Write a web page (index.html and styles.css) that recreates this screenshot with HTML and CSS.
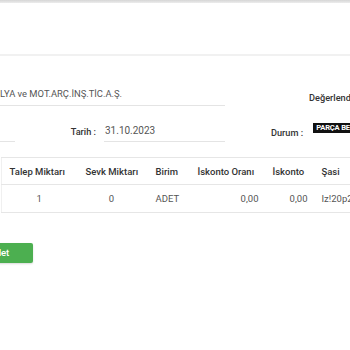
FILE: index.html
```html
<!DOCTYPE html>
<html lang="tr">
<head>
    <meta charset="UTF-8">
    <meta name="viewport" content="width=device-width, initial-scale=1.0">
    <title>Talep Detay</title>
    <link rel="stylesheet" href="styles.css">
</head>
<body>

<div class="topbar"></div>
<div class="page-header"></div>

<div class="form-section">
    <div class="form-row row-firma">
        <div class="field field-firma">LYA ve MOT.ARÇ.İNŞ.TİC.A.Ş.</div>
        <div class="label label-deger">Değerlendirme :</div>
    </div>
    <div class="form-row row-tarih">
        <div class="field field-stub"></div>
        <div class="label label-tarih">Tarih :</div>
        <div class="field field-tarih">31.10.2023</div>
        <div class="label label-durum">Durum :</div>
        <span class="badge">PARÇA BEKLENİYOR</span>
    </div>
</div>

<table class="items">
    <colgroup>
        <col class="c-talep">
        <col class="c-sevk">
        <col class="c-birim">
        <col class="c-oran">
        <col class="c-iskonto">
        <col class="c-sasi">
    </colgroup>
    <thead>
        <tr>
            <th class="center first">Talep Miktarı</th>
            <th class="center">Sevk Miktarı</th>
            <th>Birim</th>
            <th>İskonto Oranı</th>
            <th>İskonto</th>
            <th>Şasi</th>
        </tr>
    </thead>
    <tbody>
        <tr>
            <td class="center first">1</td>
            <td class="center">0</td>
            <td>ADET</td>
            <td class="num">0,00</td>
            <td class="num">0,00</td>
            <td>Iz!20p2</td>
        </tr>
    </tbody>
</table>

<div class="actions">
    <button class="save-button">Kaydet</button>
</div>

</body>
</html>
```

FILE: styles.css
```css
body {
    font-family: Roboto, "Liberation Sans", sans-serif;
    background-color: #ffffff;
    color: #555555;
    margin: 0;
    padding: 0;
    overflow: hidden;
    width: 350px;
    height: 350px;
}
.topbar {
    height: 3px;
    background: linear-gradient(#d6d6d6, #ececec);
}
.page-header {
    height: 51px;
    border-bottom: 2px solid #f1f1f1;
}
.form-section {
    padding-top: 28px;
}
.form-row {
    display: flex;
    white-space: nowrap;
    width: 500px;
}
.form-row > * {
    flex-shrink: 0;
}
.field {
    font-size: 10px;
    color: #555555;
    border-bottom: 1px solid #e4e4e4;
    box-sizing: border-box;
}
.label {
    font-size: 9.2px;
    font-weight: 500;
    color: #333333;
}
.row-firma {
    height: 22px;
}
.field-firma {
    width: 225px;
    height: 22px;
    padding-top: 4px;
    font-size: 9.4px;
}
.label-deger {
    margin-left: 84px;
    padding-top: 8px;
}
.row-tarih {
    margin-top: 13px;
    height: 23px;
    align-items: flex-start;
}
.field-stub {
    width: 15px;
    height: 23px;
}
.label-tarih {
    width: 81px;
    text-align: right;
    padding-top: 7px;
}
.field-tarih {
    width: 121px;
    height: 23px;
    margin-left: 8px;
    padding: 6px 0 0 1px;
}
.label-durum {
    margin-left: 46px;
    padding-top: 8px;
}
.badge {
    margin-left: 10px;
    margin-top: 4px;
    background: #111111;
    color: #ffffff;
    font-size: 7.6px;
    font-weight: 700;
    line-height: 10px;
    padding: 0 3px;
    letter-spacing: -0.2px;
}
.items {
    margin-top: 15px;
    margin-left: 1px;
    border-collapse: collapse;
    table-layout: fixed;
    width: 420px;
    font-size: 9.5px;
}
.c-talep { width: 75px; }
.c-sevk { width: 70px; }
.c-birim { width: 42px; }
.c-oran { width: 75px; }
.c-iskonto { width: 49px; }
.c-sasi { width: 109px; }
.items th, .items td {
    padding: 0 9px;
    text-align: left;
    white-space: nowrap;
    border-top: 1px solid #e6e6e6;
    border-bottom: 1px solid #e6e6e6;
}
.items th {
    height: 26px;
    font-weight: 500;
    color: #333333;
}
.items td {
    height: 27px;
    color: #555555;
}
.items th.first {
    padding-left: 7px;
    padding-right: 11px;
}
.items .first {
    border-left: 1px solid #f0f0f0;
}
.items .center {
    text-align: center;
}
.items .num {
    text-align: right;
    padding-right: 5px;
}
.actions {
    margin-top: 28px;
}
.save-button {
    margin-left: -24px;
    width: 57px;
    height: 20px;
    background: #4caf50;
    color: #ffffff;
    border: none;
    border-radius: 2px;
    box-shadow: 0 1px 2px rgba(0,0,0,0.15);
    font-family: Roboto, "Liberation Sans", sans-serif;
    font-size: 9.5px;
    font-weight: 500;
    text-align: left;
    padding: 0 0 0 4px;
    cursor: pointer;
}
```
